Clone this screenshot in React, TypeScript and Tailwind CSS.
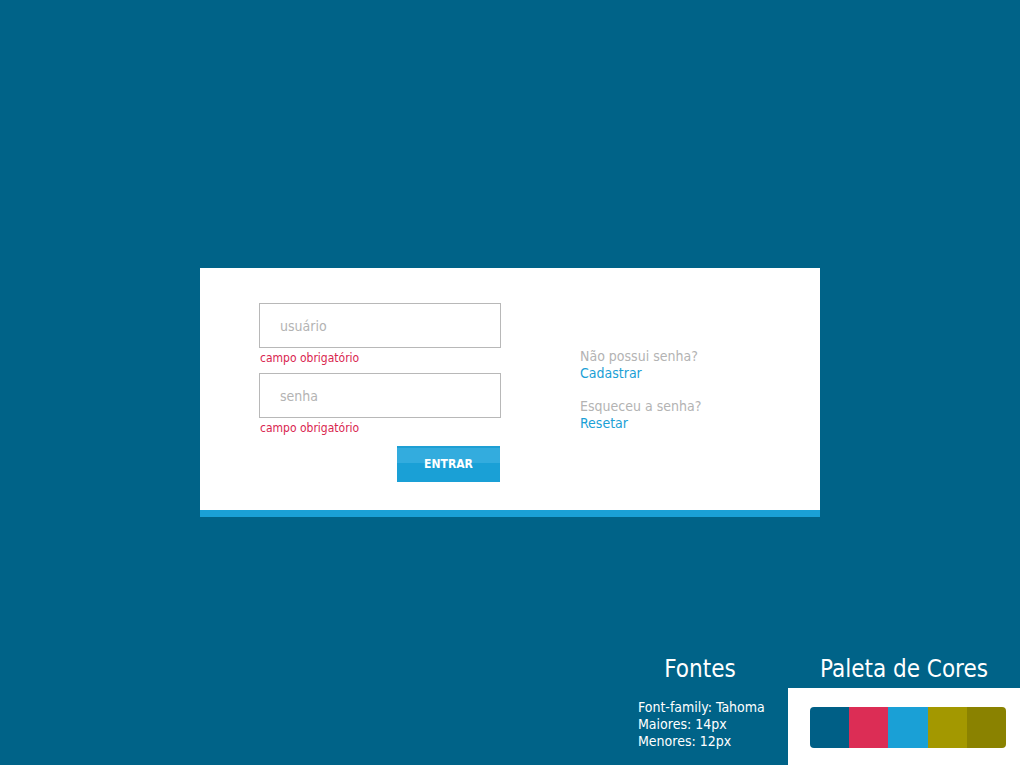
const font = { fontFamily: '"DejaVu Sans Condensed", "DejaVu Sans", sans-serif' };

const palette = ["bg-[#005f86]", "bg-[#dc2d55]", "bg-[#1aa0d6]", "bg-[#a39800]", "bg-[#8a8200]"];

export default function App() {
    return (
        <div className="w-[1020px] h-[765px] bg-[#006388] flex flex-col" style={font}>
            {/* login card */}
            <div className="mt-[268px] mx-auto w-[620px] bg-white border-b-[7px] border-[#1aa0d6]">
                <div className="flex pt-[35px] pb-[28px] pl-[59px]">
                    <div className="w-[242px] flex flex-col">
                        <input
                            className="h-[45px] border border-[#b8b8b8] px-[20px] text-[14px] outline-none placeholder:text-[#b3b3b3]"
                            placeholder="usuário"
                            style={font}
                        />
                        <p className="text-[12px] leading-[14px] text-[#d9264f] mt-[3px] pl-[1px]">campo obrigatório</p>
                        <input
                            className="mt-[8px] h-[45px] border border-[#b8b8b8] px-[20px] text-[14px] outline-none placeholder:text-[#b3b3b3]"
                            placeholder="senha"
                            type="text"
                            style={font}
                        />
                        <p className="text-[12px] leading-[14px] text-[#d9264f] mt-[3px] pl-[1px]">campo obrigatório</p>
                        <button className="self-end mt-[11px] mr-[1px] w-[103px] h-[36px] relative bg-[#1aa0d6] text-white text-[12px] font-bold overflow-hidden" style={font}>
                            <span className="absolute left-0 right-0 top-0 h-[17px] bg-[#33acde] border-t-[2px] border-[#1e9fd4]" />
                            <span className="relative">ENTRAR</span>
                        </button>
                    </div>
                    <div className="ml-[79px] mt-[45px] text-[14px] leading-[17px]">
                        <p className="text-[#b3b3b3]">Não possui senha?</p>
                        <p className="text-[#1aa0d6]">Cadastrar</p>
                        <p className="text-[#b3b3b3] mt-[16px]">Esqueceu a senha?</p>
                        <p className="text-[#1aa0d6]">Resetar</p>
                    </div>
                </div>
            </div>

            {/* style guide */}
            <div className="mt-auto flex justify-end">
                <div className="w-[176px] flex flex-col">
                    <h2 className="text-white text-[24px] leading-[28px] text-center mb-[5px]">Fontes</h2>
                    <div className="pl-[26px] pt-[11px] text-white text-[14px] leading-[17px]">
                        <p>Font-family: Tahoma</p>
                        <p>Maiores: 14px</p>
                        <p>Menores: 12px</p>
                    </div>
                </div>
                <div className="w-[232px] flex flex-col">
                    <h2 className="text-white text-[24px] leading-[28px] text-center mb-[5px]">Paleta de Cores</h2>
                    <div className="bg-white h-[77px] pl-[22px] pt-[19px]">
                        <div className="flex w-[196px] h-[41px] rounded-[4px] overflow-hidden">
                            {palette.map((c, i) => (
                                <div key={i} className={`flex-1 ${c}`} />
                            ))}
                        </div>
                    </div>
                </div>
            </div>
        </div>
    );
}
